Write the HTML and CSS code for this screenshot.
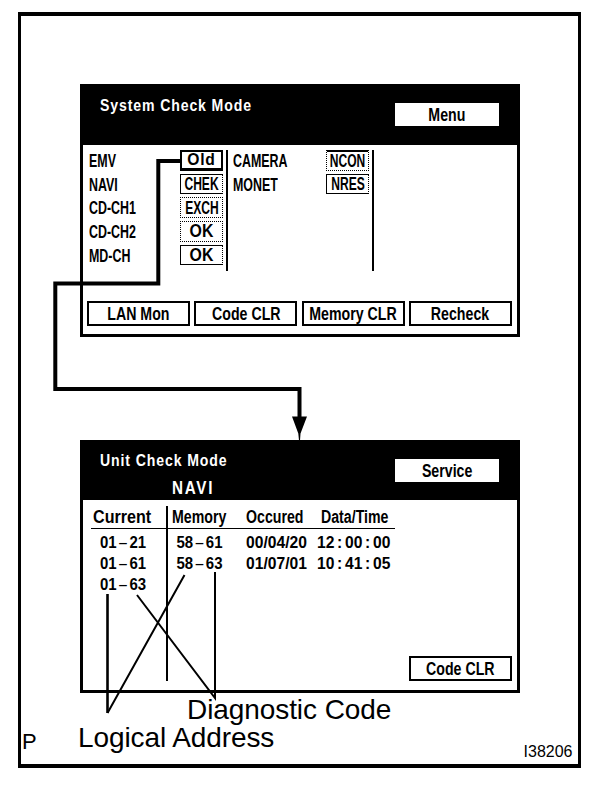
FILE: index.html
```
<!DOCTYPE html>
<html lang="en">
<head>
<meta charset="utf-8">
<title>System Check Mode</title>
<link rel="stylesheet" href="styles.css">
</head>
<body>
<main class="frame">
  <section class="panel">
    <header class="head head-system">
      <h1 class="title"><span class="t-title">System Check Mode</span></h1>
      <div class="tab"><span class="t-btn">Menu</span></div>
    </header>
    <div class="units">
      <dl class="list list-a">
        <dt><span class="t-unit">EMV</span></dt><dd class="badge strong"><span class="t-old">Old</span></dd>
        <dt><span class="t-unit">NAVI</span></dt><dd class="badge solid"><span class="t-code">CHEK</span></dd>
        <dt><span class="t-unit">CD-CH1</span></dt><dd class="badge"><span class="t-code">EXCH</span></dd>
        <dt><span class="t-unit">CD-CH2</span></dt><dd class="badge"><span class="t-ok">OK</span></dd>
        <dt><span class="t-unit">MD-CH</span></dt><dd class="badge solid"><span class="t-ok">OK</span></dd>
      </dl>
      <dl class="list list-b">
        <dt><span class="t-unit">CAMERA</span></dt><dd class="badge topline"><span class="t-code">NCON</span></dd>
        <dt><span class="t-unit">MONET</span></dt><dd class="badge solid"><span class="t-code">NRES</span></dd>
      </dl>
    </div>
    <footer class="actions">
      <div class="btn"><span class="t-btn">LAN Mon</span></div>
      <div class="btn"><span class="t-btn">Code CLR</span></div>
      <div class="btn"><span class="t-btn">Memory CLR</span></div>
      <div class="btn"><span class="t-btn">Recheck</span></div>
    </footer>
  </section>

  <section class="panel panel-unit">
    <header class="head head-unit">
      <div class="title">
        <h2><span class="t-title">Unit Check Mode</span></h2>
        <p class="unit-name"><span class="t-navi">NAVI</span></p>
      </div>
      <div class="tab"><span class="t-btn">Service</span></div>
    </header>
    <div class="log">
      <div class="current">
        <div class="row label"><span class="t-current">Current</span></div>
        <div class="rows">
          <div><span class="t-num">01<i>-</i>21</span></div>
          <div><span class="t-num">01<i>-</i>61</span></div>
          <div><span class="t-num">01<i>-</i>63</span></div>
        </div>
      </div>
      <div class="memory">
        <div class="row label cols"><span class="t-btn">Memory</span><span class="t-btn">Occured</span><span class="t-btn">Data/Time</span></div>
        <div class="rows">
          <div class="cols"><span class="t-num code">58<i>-</i>61</span><span class="t-date">00/04/20</span><span class="t-date time">12<b>:</b>00<b>:</b>00</span></div>
          <div class="cols"><span class="t-num code">58<i>-</i>63</span><span class="t-date">01/07/01</span><span class="t-date time">10<b>:</b>41<b>:</b>05</span></div>
        </div>
      </div>
      <div class="btn clear"><span class="t-btn">Code CLR</span></div>
    </div>
  </section>

  <p class="caption">Diagnostic Code</p>
  <div class="bottom">
    <span class="mark">P</span>
    <span class="address">Logical Address</span>
    <span class="figure">I38206</span>
  </div>
</main>

<svg class="lines" viewBox="0 0 608 790" width="608" height="790" aria-hidden="true">
  <path class="link" d="M181 161H158.3V283.5H55.3V389H299.5V420"/>
  <path d="M292 416.5h15l-6.5 17-.5 7h-1l-.7-7z"/>
  <path class="lead heavy" d="M107.5 594V713"/>
  <path class="lead" d="M184.5 575L107.5 713M137 595L215 698V572"/>
</svg>
</body>
</html>
```
FILE: styles.css
```
* { box-sizing: border-box; margin: 0; padding: 0; }

body {
  width: 608px;
  height: 790px;
  overflow: hidden;
  position: relative;
  padding: 12px 0 0 18px;
  background: #fff;
  color: #000;
  font-family: "Liberation Sans", Arial, sans-serif;
}

.frame {
  width: 563px;
  height: 756px;
  border: solid #000;
  border-width: 4px 3px;
  padding-top: 68px;
}

.panel {
  width: 440px;
  height: 253px;
  margin-left: 59px;
  border: solid #000;
  border-width: 0 3px 3px;
  font-weight: bold;
}
.panel-unit { margin-top: 103px; }

.head {
  display: flex;
  justify-content: space-between;
  background: #000;
  color: #fff;
  padding: 0 18px 0 17px;
}
.head-system { height: 61px; }
.head-unit { height: 60px; }
.title, .title h2 { font-size: 16px; line-height: 18px; }
.head-system .title { padding-top: 12.5px; }
.head-unit .title { padding-top: 11.5px; }
.unit-name { margin-top: 8.5px; padding-left: 72px; font-size: 17.5px; line-height: 20px; }
.tab {
  width: 104px;
  height: 23px;
  margin-top: 19px;
  background: #fff;
  color: #000;
}

/* condensed lettering */
.panel span { display: inline-block; white-space: nowrap; transform-origin: left center; }
.panel .t-title { transform: scaleX(.88); letter-spacing: 1px; }
.panel .t-navi { transform: scaleX(.87); letter-spacing: 2px; }
.t-unit { transform: scaleX(.69); }
.t-btn { transform: scaleX(.81); }
.t-current { transform: scaleX(.92); }
.t-num { transform: scaleX(.88); }
.t-date { transform: scaleX(.92); }
.panel .t-code { transform: scaleX(.67); }
.panel .t-ok { transform: scaleX(.88); }
.panel .t-old { transform: scaleX(.92); letter-spacing: .8px; }

.units { display: flex; height: 156px; padding-top: 5px; }
.list {
  display: grid;
  align-content: start;
  grid-auto-rows: 20px;
  row-gap: 3.7px;
  height: 121px;
  border-right: 2px solid #000;
  font-size: 18px;
  line-height: 20px;
}
.list-a { width: 145px; grid-template-columns: 91px 43px; padding-left: 6px; }
.list-b { width: 146px; grid-template-columns: 93px 43px; padding-left: 5px; }
.list dt { padding-top: 1px; }
.badge { display: flex; justify-content: center; align-items: center; height: 20.5px; border: 1px dotted #000; }
.badge.solid { border-style: solid dotted solid solid; }
.badge.topline { border-top: 2px solid #000; }
.badge.strong { border: 2px solid #000; border-bottom-width: 3px; height: 21px; font-size: 17px; }

.actions { display: flex; justify-content: space-between; padding: 0 5px 0 4px; }
.btn, .tab { display: flex; justify-content: center; align-items: center; font-size: 17.5px; line-height: 20px; }
.btn { width: 103px; height: 25px; border: 2px solid #000; }
.panel .btn span, .panel .tab span, .panel .badge span { flex: none; transform-origin: center; }

.log { display: flex; height: 190px; padding: 6px 5px 0 8px; }
.current { width: 77px; height: 175px; border-right: 2px solid #000; }
.memory { width: 227px; }
.label {
  height: 23px;
  padding-top: .6px;
  border-bottom: 1px solid #000;
  font-size: 17.5px;
  line-height: 20px;
}
.current .label { padding-left: 2px; }
.cols { display: grid; grid-template-columns: 74px 75px 74px; padding-left: 4px; }
.rows { padding-top: 3px; font-size: 17px; line-height: 21px; }
.current .rows { padding-left: 8.5px; }
.code { padding-left: 5px; }
.time { margin-left: -4px; }
.rows i, .rows b { display: inline-block; text-align: center; font-style: normal; }
.rows i { width: 14.5px; font-weight: normal; transform: scaleX(2.1); }
.rows b { width: 11.5px; }
.clear { align-self: flex-end; margin: 0 0 9px auto; }

.caption { margin: 3px 0 0 166px; font-size: 28px; line-height: 28px; letter-spacing: -.08px; }
.bottom { display: flex; align-items: flex-start; }
.mark { width: 57px; padding-left: 1px; margin-top: 7px; font-size: 22px; line-height: 22px; }
.address { font-size: 28px; line-height: 28px; letter-spacing: -.1px; }
.figure { margin: 19.5px 5.5px 0 auto; font-size: 16px; line-height: 16px; }

.lines { position: absolute; left: 0; top: 0; }
.link { fill: none; stroke: #000; stroke-width: 4; }
.lead { fill: none; stroke: #000; stroke-width: 2; }
.heavy { stroke-width: 2.6; }
```
